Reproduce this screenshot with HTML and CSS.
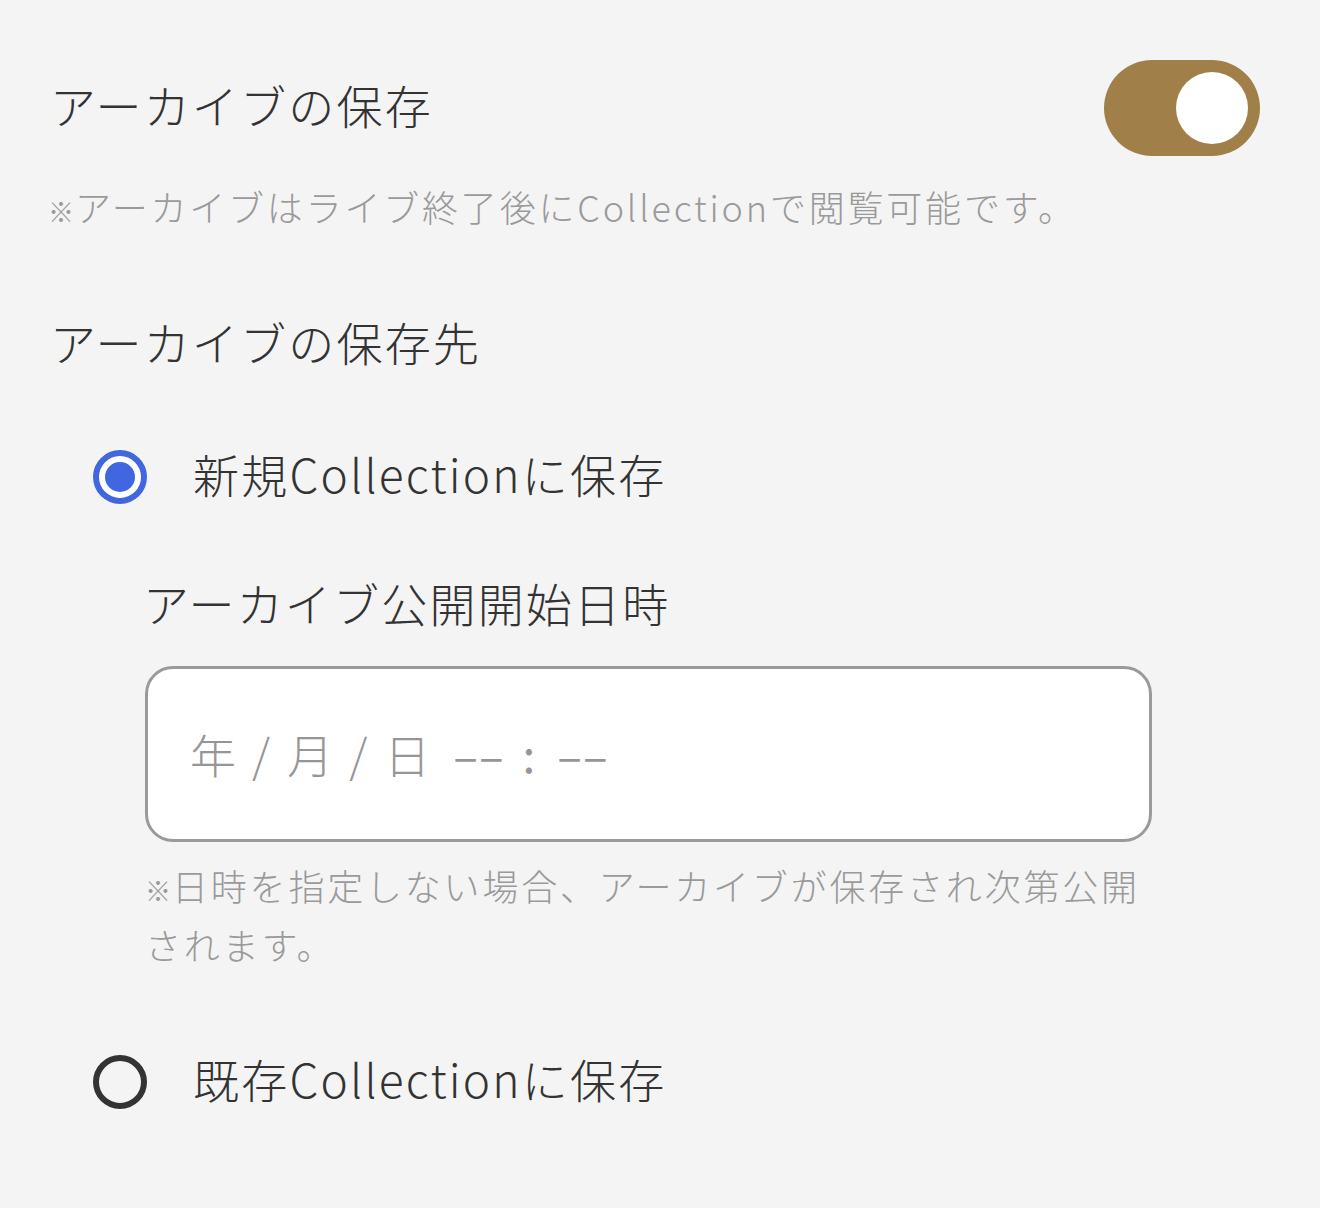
FILE: index.html
```html
<!DOCTYPE html>
<html lang="ja">
<head>
<meta charset="utf-8">
<title>アーカイブ設定</title>
<link rel="stylesheet" href="styles.css">
</head>
<body>
<main class="page">
  <div class="toggle-row">
    <span class="title">アーカイブの保存</span>
    <span class="switch"><span class="knob"></span></span>
  </div>
  <p class="note note-top"><span class="kome">※</span>アーカイブはライブ終了後にCollectionで閲覧可能です。</p>

  <h2 class="title section-title">アーカイブの保存先</h2>

  <div class="radio-row">
    <span class="radio checked"><span class="dot"></span></span>
    <span class="radio-label">新規Collectionに保存</span>
  </div>

  <div class="sub">
    <div class="sub-label">アーカイブ公開開始日時</div>
    <div class="field">
      <span class="placeholder"><span class="ph-part">年</span><span class="ph-sep">/</span><span class="ph-part">月</span><span class="ph-sep">/</span><span class="ph-part">日</span><span class="ph-dash">––</span><span class="ph-colon">:</span><span class="ph-dash ph-dash-2">––</span></span>
    </div>
    <p class="note note-sub"><span class="kome">※</span><span>日時を指定しない場合、アーカイブが保存され次第公開</span><span>されます。</span></p>
  </div>

  <div class="radio-row radio-row-2">
    <span class="radio"></span>
    <span class="radio-label">既存Collectionに保存</span>
  </div>
</main>
</body>
</html>
```

FILE: styles.css
```css
html, body {
  margin: 0;
  padding: 0;
  background: #f4f4f4;
}
body {
  font-family: "Noto Sans CJK JP", "Noto Sans", sans-serif;
  font-weight: 300;
  color: #333333;
}
.page {
  padding: 60px 60px 0 50px;
}
.toggle-row {
  display: flex;
  align-items: center;
  justify-content: space-between;
  height: 96px;
}
.title {
  font-size: 46px;
  letter-spacing: 2.2px;
  line-height: 72px;
  font-weight: 300;
  margin: 0;
}
.toggle-row .title {
  padding-bottom: 8px;
}
.switch {
  width: 156px;
  height: 96px;
  border-radius: 48px;
  background: #a08048;
  display: flex;
  align-items: center;
  justify-content: flex-end;
  padding-right: 12px;
  box-sizing: border-box;
}
.knob {
  width: 72px;
  height: 72px;
  border-radius: 50%;
  background: #ffffff;
}
.note {
  font-size: 36px;
  letter-spacing: 2.8px;
  color: #9a9a9a;
  margin: 0;
}
.kome {
  font-size: 26px;
  line-height: 1;
  letter-spacing: 0;
  margin-right: 1px;
}
.note-top {
  margin-top: 23px;
  line-height: 54px;
  margin-left: -2px;
}
.section-title {
  margin-top: 72px;
}
.radio-row {
  display: flex;
  align-items: center;
  height: 72px;
  margin-top: 64px;
  padding-left: 43px;
}
.radio {
  width: 54px;
  height: 54px;
  box-sizing: border-box;
  border: 6px solid #333333;
  border-radius: 50%;
  display: flex;
  align-items: center;
  justify-content: center;
  flex: none;
}
.radio.checked {
  border-color: #4066e0;
  background: #ffffff;
}
.dot {
  width: 30px;
  height: 30px;
  border-radius: 50%;
  background: #4066e0;
}
.radio-label {
  font-size: 46px;
  letter-spacing: 2.2px;
  line-height: 72px;
  margin-left: 46px;
  padding-bottom: 8px;
}
.sub {
  padding-left: 95px;
  width: 1007px;
}
.sub-label {
  font-size: 46px;
  letter-spacing: 2.2px;
  line-height: 72px;
  margin-top: 53px;
  margin-left: -2px;
}
.field {
  margin-top: 28px;
  height: 176px;
  box-sizing: border-box;
  border: 3px solid #9a9a9a;
  border-radius: 28px;
  background: #ffffff;
  display: flex;
  align-items: center;
  padding-left: 42px;
}
.placeholder {
  display: flex;
  align-items: center;
  font-size: 46px;
  color: #969696;
  line-height: 72px;
  padding-bottom: 2px;
}
.ph-sep {
  margin: 0 17px 0 16px;
}
.ph-dash {
  letter-spacing: 1px;
  margin-left: 23px;
  font-weight: 400;
}
.ph-dash-2 {
  margin-left: 0;
}
.ph-colon {
  margin: 0 22px 0 18px;
  font-weight: 400;
}
.note-sub {
  margin-top: 14px;
  line-height: 59px;
}
.radio-row-2 {
  margin-top: 72px;
}
```
